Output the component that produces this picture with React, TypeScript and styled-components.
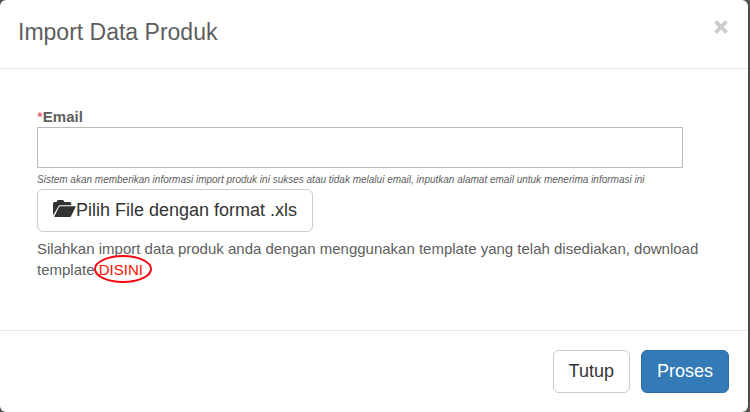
import React from "react";
import styled, { createGlobalStyle } from "styled-components";

const GlobalStyle = createGlobalStyle`
  *, *::before, *::after { box-sizing: border-box; }
  html { background: #555657; }
  body {
    margin: 0;
    color: #5e5e5e;
    font-family: "Liberation Sans", Arial, Helvetica, sans-serif;
    font-size: 15px;
    line-height: 21px;
  }
  button, input { font-family: inherit; }
`;

const Backdrop = styled.div`
  padding-right: 2px;
  overflow: hidden;
`;

const Dialog = styled.form`
  background: #fff;
  border-radius: 6px;
  box-shadow: 0 0 2px rgba(0, 0, 0, 0.7);
`;

const Header = styled.header`
  display: flex;
  justify-content: space-between;
  align-items: flex-start;
  padding: 16px 20px 20px 18px;
  border-bottom: 1px solid #e5e5e5;
`;

const Title = styled.h4`
  margin: 0;
  font-size: 23px;
  font-weight: 400;
  line-height: 32px;
`;

const CloseButton = styled.button`
  padding: 0;
  border: 0;
  background: transparent;
  color: #cccccc;
  font-size: 24px;
  font-weight: 700;
  line-height: 21px;
  -webkit-text-stroke: 1px #cccccc;
  cursor: pointer;
`;

const Body = styled.div`
  display: flex;
  flex-direction: column;
  align-items: flex-start;
  padding: 37px 37px 50px;
`;

const Label = styled.label`
  font-weight: 700;
`;

const Required = styled.span`
  color: #e8304a;
  font-weight: 400;
`;

const EmailInput = styled.input`
  align-self: stretch;
  height: 41px;
  margin-right: 28px;
  padding: 6px 12px;
  border: 1px solid #bbbbbb;
  border-radius: 0;
  background: #fff;
  font-size: 15px;
`;

const Hint = styled.em`
  padding-top: 3px;
  font-size: 10px;
  line-height: 18px;
`;

const Button = styled.button<{ $primary?: boolean }>`
  display: inline-flex;
  align-items: center;
  padding: 9px 15px;
  border: 1px solid ${(p) => (p.$primary ? "#2e6da4" : "#cccccc")};
  border-radius: 6px;
  background: ${(p) => (p.$primary ? "#337ab7" : "#fff")};
  color: ${(p) => (p.$primary ? "#fff" : "#333")};
  font-size: 18px;
  line-height: 23px;
  cursor: pointer;
`;

const Note = styled.p`
  margin: 6px 0 0;
`;

const TemplateLink = styled.a`
  position: relative;
  color: #ff1200;
  text-decoration: none;
`;

const Circle = styled.svg`
  position: absolute;
  top: -7px;
  left: -6px;
  width: 60px;
  height: 30px;
  pointer-events: none;
`;

const Footer = styled.footer`
  display: flex;
  justify-content: flex-end;
  gap: 11px;
  padding: 19px;
  border-top: 1px solid #e5e5e5;
`;

function FolderOpenIcon() {
  return (
    <svg width="23" height="21" viewBox="0 0 23 21" fill="#333" aria-hidden="true">
      <path d="M0 15.5V3.5Q0 2 1.5 2H3.5L4.3 0.6Q4.6 0 5.3 0H9.6Q10.3 0 10.6 0.6L11.4 2H16.8Q18.3 2 18.3 3.5V5.2H7.2Q6 5.2 5.5 6.2Z" />
      <path d="M7.4 6.2H22.2Q23 6.2 22.6 7L18 16.3Q17.6 17 16.8 17H1.8Q1 17 1.4 16.2L6 7Q6.4 6.2 7.4 6.2Z" />
    </svg>
  );
}

export default function App() {
  return (
    <>
      <GlobalStyle />
      <Backdrop>
        <Dialog role="dialog" aria-labelledby="import-title" onSubmit={(e) => e.preventDefault()}>
          <Header>
            <Title id="import-title">Import Data Produk</Title>
            <CloseButton type="button" aria-label="Tutup dialog">×</CloseButton>
          </Header>
          <Body>
            <Label htmlFor="email"><Required>*</Required>Email</Label>
            <EmailInput id="email" type="email" aria-describedby="email-hint" />
            <Hint id="email-hint">
              Sistem akan memberikan informasi import produk ini sukses atau tidak melalui email, inputkan alamat email untuk menerima informasi ini
            </Hint>
            <Button type="button"><FolderOpenIcon />Pilih File dengan format .xls</Button>
            <Note>
              Silahkan import data produk anda dengan menggunakan template yang telah disediakan, download template{" "}
              <TemplateLink href="#template">
                DISINI
                <Circle viewBox="0 0 60 30" aria-hidden="true">
                  <ellipse cx="30" cy="15" rx="28" ry="13" fill="none" stroke="#f40612" strokeWidth="2" />
                </Circle>
              </TemplateLink>
            </Note>
          </Body>
          <Footer>
            <Button type="button">Tutup</Button>
            <Button type="submit" $primary>Proses</Button>
          </Footer>
        </Dialog>
      </Backdrop>
    </>
  );
}
